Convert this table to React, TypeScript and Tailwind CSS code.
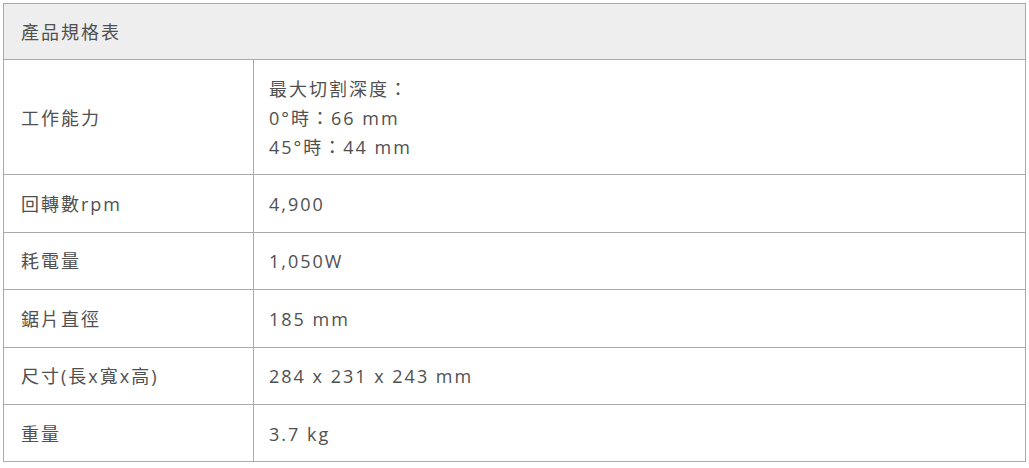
const rows: { label: string; value: string[] }[] = [
  { label: "工作能力", value: ["最大切割深度：", "0°時：66 mm", "45°時：44 mm"] },
  { label: "回轉數rpm", value: ["4,900"] },
  { label: "耗電量", value: ["1,050W"] },
  { label: "鋸片直徑", value: ["185 mm"] },
  { label: "尺寸(長x寬x高)", value: ["284 x 231 x 243 mm"] },
  { label: "重量", value: ["3.7 kg"] },
];

const App = () => {
  return (
    <div className="min-h-screen bg-white pt-[3px] pl-[3px]">
      <table
        className="w-[1023px] border-collapse text-[18px] leading-[29px] tracking-[2px] text-[#505050]"
        style={{ fontFamily: '"Open Sans", "Noto Sans CJK TC", sans-serif' }}
      >
        <thead>
          <tr>
            <th
              colSpan={2}
              className="border border-[#aaa] bg-[#eee] px-[17px] pt-[14px] pb-[12px] text-left font-normal"
            >
              產品規格表
            </th>
          </tr>
        </thead>
        <tbody>
          {rows.map((r) => (
            <tr key={r.label}>
              <td className="w-[250px] border border-[#aaa] px-[17px] pt-[14.7px] pb-[12.7px] align-middle">
                {r.label}
              </td>
              <td className="border border-[#aaa] px-[15px] pt-[14.7px] pb-[12.7px] align-middle">
                {r.value.map((v) => (
                  <div key={v}>{v}</div>
                ))}
              </td>
            </tr>
          ))}
        </tbody>
      </table>
    </div>
  );
};

export default App;
